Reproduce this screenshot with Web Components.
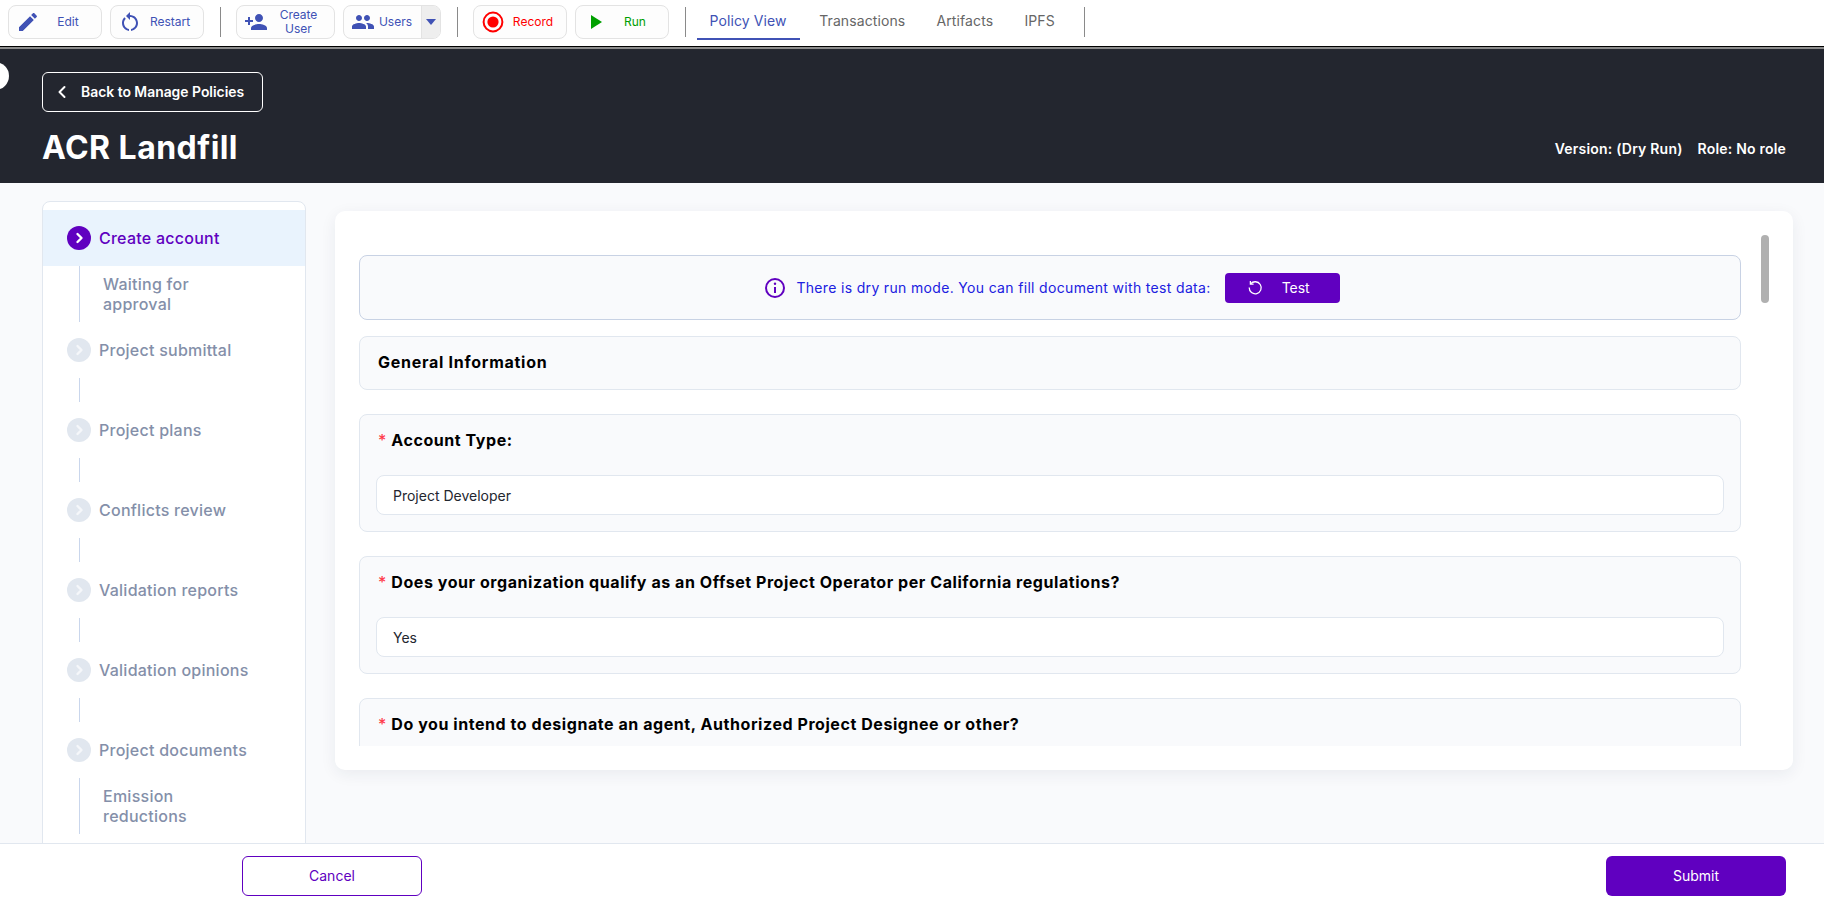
<!DOCTYPE html>
<html lang="en">
<head>
<meta charset="utf-8">
<title>ACR Landfill</title>
<style>
  html, body { margin: 0; height: 100%; overflow: hidden; }
  body { font-family: "Inter", "Liberation Sans", sans-serif; background: #f9fafc; color: #000; }
  policy-page { height: 905px; }
  tool-divider:last-child { margin-left: 10px; }
</style>
</head>
<body>

<policy-page>
  <app-toolbar slot="toolbar">
    <tool-button label="Edit"><svg viewBox="0 0 24 24" fill="#4052b5"><path d="M3 17.25V21h3.75L17.81 9.94l-3.75-3.75L3 17.25zM20.71 7.04c.39-.39.39-1.02 0-1.41l-2.34-2.34c-.39-.39-1.02-.39-1.41 0l-1.83 1.83 3.75 3.75 1.83-1.83z"/></svg></tool-button>
    <tool-button label="Restart"><svg viewBox="0 0 24 24" fill="#4052b5"><path d="M12 5V2L8 6l4 4V7c3.31 0 6 2.69 6 6 0 2.97-2.17 5.43-5 5.91v2.02c3.95-.49 7-3.85 7-7.93 0-4.42-3.58-8-8-8zm-6 8c0-1.65.67-3.15 1.76-4.24L6.34 7.34C4.9 8.79 4 10.79 4 13c0 4.08 3.05 7.44 7 7.93v-2.02c-2.83-.48-5-2.94-5-5.91z"/></svg></tool-button>
    <tool-divider></tool-divider>
    <tool-button label="Create User" narrow><svg viewBox="0 0 24 24" fill="#4052b5"><path d="M15 12c2.21 0 4-1.79 4-4s-1.79-4-4-4-4 1.79-4 4 1.79 4 4 4zm-9-2V7H4v3H1v2h3v3h2v-3h3v-2H6zm9 4c-2.67 0-8 1.34-8 4v2h16v-2c0-2.66-5.33-4-8-4z"/></svg></tool-button>
    <tool-button label="Users" dropdown><svg viewBox="0 0 24 24" fill="#4052b5"><path d="M16 11c1.66 0 2.99-1.34 2.99-3S17.66 5 16 5c-1.66 0-3 1.34-3 3s1.34 3 3 3zm-8 0c1.66 0 2.99-1.34 2.99-3S9.66 5 8 5C6.34 5 5 6.34 5 8s1.34 3 3 3zm0 2c-2.33 0-7 1.17-7 3.5V19h14v-2.5c0-2.33-4.67-3.5-7-3.5zm8 0c-.29 0-.62.02-.97.05 1.16.84 1.97 1.97 1.97 3.45V19h6v-2.5c0-2.33-4.67-3.5-7-3.5z"/></svg></tool-button>
    <tool-divider></tool-divider>
    <tool-button label="Record" color="#ff0000"><svg viewBox="0 0 24 24"><circle cx="12" cy="12" r="9.4" fill="none" stroke="#ff0000" stroke-width="2"/><circle cx="12" cy="12" r="5.6" fill="#ff0000"/></svg></tool-button>
    <tool-button label="Run" color="#00a000"><svg viewBox="0 0 24 24" fill="#00a000"><path d="M8 5v14l11-7z"/></svg></tool-button>
    <tool-divider></tool-divider>
    <tool-tab active>Policy View</tool-tab>
    <tool-tab>Transactions</tool-tab>
    <tool-tab>Artifacts</tool-tab>
    <tool-tab>IPFS</tool-tab>
    <tool-divider></tool-divider>
  </app-toolbar>

  <policy-header slot="header" back="Back to Manage Policies" name="ACR Landfill" version="Version: (Dry Run)" role="Role: No role"></policy-header>

  <step-list slot="steps">
    <step-item active>Create account</step-item>
    <step-item sub>Waiting for approval</step-item>
    <step-item>Project submittal</step-item>
    <step-item>Project plans</step-item>
    <step-item>Conflicts review</step-item>
    <step-item>Validation reports</step-item>
    <step-item>Validation opinions</step-item>
    <step-item>Project documents</step-item>
    <step-item sub>Emission reductions</step-item>
  </step-list>

  <form-card slot="form">
    <dry-run-note>There is dry run mode. You can fill document with test data:</dry-run-note>
    <form-section>General Information</form-section>
    <form-field label="Account Type:" value="Project Developer"></form-field>
    <form-field label="Does your organization qualify as an Offset Project Operator per California regulations?" value="Yes"></form-field>
    <form-field label="Do you intend to designate an agent, Authorized Project Designee or other?"></form-field>
  </form-card>

  <app-footer slot="footer"></app-footer>
</policy-page>

<script>
const chevron = (stroke) => /* html */ `
  <svg viewBox="0 0 24 24" width="24" height="24" fill="none" stroke="${stroke}" stroke-width="2.4" stroke-linecap="round" stroke-linejoin="round"><path d="M10.5 8l4 4-4 4"/></svg>`;

class PolicyPage extends HTMLElement {
  css = () => /* css */ `
  :host {
    display: flex;
    flex-direction: column;
    overflow: hidden;
  }
  .body {
    flex: 1;
    min-height: 0;
    display: flex;
    align-items: flex-start;
    gap: 29px;
    padding: 18px 31px 0 42px;
    overflow: hidden;
  }
  `;

  html = () => /* html */ `
  <style>${this.css()}</style>
  <slot name="toolbar"></slot>
  <slot name="header"></slot>
  <div class="body">
    <slot name="steps"></slot>
    <slot name="form"></slot>
  </div>
  <slot name="footer"></slot>
  `;

  constructor() {
    super();
    this.attachShadow({ mode: "open" });
  }

  connectedCallback() {
    this.shadowRoot.innerHTML = this.html();
  }
}

class AppToolbar extends HTMLElement {
  css = () => /* css */ `
  :host {
    display: flex;
    align-items: flex-start;
    gap: 8px;
    height: 41px;
    padding: 5px 0 0 8px;
    background: #fff;
    border-bottom: 1px solid #000;
  }
  `;

  constructor() {
    super();
    this.attachShadow({ mode: "open" }).innerHTML = `<style>${this.css()}</style><slot></slot>`;
  }
}

class ToolDivider extends HTMLElement {
  constructor() {
    super();
    this.attachShadow({ mode: "open" }).innerHTML = /* html */ `
    <style>
      :host { display: block; width: 1px; height: 30px; margin: 2px 7.5px 0; background: #8a8a8a; }
    </style>`;
  }
}

class ToolButton extends HTMLElement {
  css = () => /* css */ `
  :host {
    display: flex;
    width: 94px;
    height: 34px;
    box-sizing: border-box;
    border: 1px solid #e3e3e3;
    border-radius: 8px;
    background: #fdfdfd;
    overflow: hidden;
    font-size: 12px;
    line-height: 14px;
    color: var(--tool-color, #4052b5);
  }
  :host([narrow]) { width: 99px; }
  :host([dropdown]) { width: 98px; }
  .main {
    flex: 1;
    min-width: 0;
    display: flex;
    align-items: center;
    padding: 0 5px 0 7px;
  }
  ::slotted(svg) { width: 24px; height: 24px; flex: none; }
  .label { flex: 1; text-align: center; }
  :host([narrow]) .label { padding: 0 10px; }
  .caret {
    width: 18px;
    background: #eeeeee;
    border-left: 1px solid #e3e3e3;
    display: flex;
    align-items: center;
    justify-content: center;
    flex: none;
  }
  .caret::before {
    content: "";
    border: 5.5px solid transparent;
    border-top: 6px solid #4052b5;
    border-bottom: 0;
  }
  `;

  constructor() {
    super();
    this.attachShadow({ mode: "open" });
  }

  connectedCallback() {
    const color = this.getAttribute("color");
    if (color) this.style.setProperty("--tool-color", color);
    const caret = this.hasAttribute("dropdown") ? `<div class="caret"></div>` : "";
    this.shadowRoot.innerHTML = /* html */ `
    <style>${this.css()}</style>
    <div class="main"><slot></slot><span class="label">${this.getAttribute("label")}</span></div>
    ${caret}`;
  }
}

class ToolTab extends HTMLElement {
  constructor() {
    super();
    this.attachShadow({ mode: "open" }).innerHTML = /* html */ `
    <style>
      :host {
        display: block;
        height: 35px;
        padding: 0 11.6px;
        line-height: 31px;
        font-size: 14px;
        letter-spacing: 0.1px;
        color: #666;
      }
      :host([active]) {
        margin-left: -4.5px;
        padding: 0 13px;
        color: #4052b5;
        box-shadow: inset 0 -2px 0 #4052b5;
      }
    </style>
    <slot></slot>`;
  }
}

class PolicyHeader extends HTMLElement {
  css = () => /* css */ `
  :host {
    display: block;
    position: relative;
    height: 136px;
    box-sizing: border-box;
    padding: 23px 38px 0 42px;
    background: #23262f;
    border-top: 2px solid #8c8c8c;
    color: #fff;
  }
  .dot {
    position: absolute;
    left: -19px;
    top: 13px;
    width: 28px;
    height: 28px;
    border-radius: 50%;
    background: #fff;
  }
  .back {
    display: flex;
    align-items: center;
    width: 221px;
    height: 40px;
    box-sizing: border-box;
    border: 1px solid #fff;
    border-radius: 6px;
    padding-left: 8px;
    font-size: 13.9px;
    font-weight: 600;
  }
  .back svg { margin-right: 6px; }
  .row {
    display: flex;
    align-items: center;
    justify-content: space-between;
    margin-top: 16px;
  }
  h1 {
    margin: 0;
    font-size: 32px;
    line-height: 40px;
    font-weight: 700;
    letter-spacing: 0.45px;
  }
  .meta {
    display: flex;
    gap: 15px;
    font-size: 14px;
    font-weight: 600;
    letter-spacing: 0.2px;
  }
  `;

  constructor() {
    super();
    this.attachShadow({ mode: "open" });
  }

  connectedCallback() {
    this.shadowRoot.innerHTML = /* html */ `
    <style>${this.css()}</style>
    <div class="dot"></div>
    <div class="back"><svg viewBox="0 0 24 24" width="24" height="24" fill="none" stroke="#fff" stroke-width="2" stroke-linecap="round" stroke-linejoin="round"><path d="M13.5 7l-5 5 5 5"/></svg>${this.getAttribute("back")}</div>
    <div class="row">
      <h1>${this.getAttribute("name")}</h1>
      <div class="meta"><span>${this.getAttribute("version")}</span><span>${this.getAttribute("role")}</span></div>
    </div>`;
  }
}

class StepList extends HTMLElement {
  constructor() {
    super();
    this.attachShadow({ mode: "open" }).innerHTML = /* html */ `
    <style>
      :host {
        display: block;
        flex: none;
        width: 264px;
        height: 700px;
        box-sizing: border-box;
        padding-top: 8px;
        background: #fff;
        border: 1px solid #e1e7ef;
        border-radius: 8px;
      }
    </style>
    <slot></slot>`;
  }
}

class StepItem extends HTMLElement {
  css = () => /* css */ `
  :host {
    display: block;
    font-size: 16px;
    line-height: 20px;
    font-weight: 500;
    letter-spacing: 0.25px;
    color: #848fa9;
  }
  .head {
    display: flex;
    align-items: center;
    gap: 8px;
    height: 56px;
    padding-left: 24px;
  }
  :host([active]) .head { background: #e9f3fd; color: #6000c0; }
  .bullet {
    width: 24px;
    height: 24px;
    border-radius: 50%;
    background: #e1e7ef;
  }
  :host([active]) .bullet { background: #6000c0; }
  .tail {
    margin-left: 36px;
    height: 24px;
    border-left: 1px solid #c9d6ec;
  }
  .sub {
    margin-left: 36px;
    height: 56px;
    border-left: 1px solid #c9d6ec;
    padding-left: 23px;
    display: flex;
    align-items: center;
    width: 110px;
  }
  `;

  constructor() {
    super();
    this.attachShadow({ mode: "open" });
  }

  connectedCallback() {
    const active = this.hasAttribute("active");
    if (this.hasAttribute("sub")) {
      this.shadowRoot.innerHTML = `<style>${this.css()}</style><div class="sub"><span><slot></slot></span></div>`;
      return;
    }
    // the line under a step belongs to the next one when that is a sub step
    const next = this.nextElementSibling;
    const tail = next && next.hasAttribute("sub") ? "" : `<div class="tail"></div>`;
    this.shadowRoot.innerHTML = /* html */ `
    <style>${this.css()}</style>
    <div class="head"><span class="bullet">${chevron(active ? "#fff" : "#f5f7fa")}</span><span><slot></slot></span></div>
    ${tail}`;
  }
}

class FormCard extends HTMLElement {
  css = () => /* css */ `
  :host {
    display: block;
    position: relative;
    flex: none;
    width: 1458px;
    height: 559px;
    margin-top: 10px;
    box-sizing: border-box;
    padding: 44px 52px 24px 24px;
    background: #fff;
    border-radius: 10px;
    box-shadow: 0 4px 16px rgba(32, 40, 70, 0.07);
  }
  .scroll {
    height: 100%;
    overflow: hidden;
  }
  .thumb {
    position: absolute;
    left: 1426px;
    top: 24px;
    width: 8px;
    height: 68px;
    border-radius: 4px;
    background: #b0b0b0;
  }
  `;

  constructor() {
    super();
    this.attachShadow({ mode: "open" }).innerHTML = /* html */ `
    <style>${this.css()}</style>
    <div class="scroll"><slot></slot></div>
    <div class="thumb"></div>`;
  }
}

class DryRunNote extends HTMLElement {
  css = () => /* css */ `
  :host {
    display: flex;
    align-items: center;
    justify-content: center;
    height: 65px;
    box-sizing: border-box;
    margin-bottom: 16px;
    padding-left: 5px;
    background: #f9fafc;
    border: 1px solid #c8d2e4;
    border-radius: 8px;
    font-size: 14px;
    font-weight: 400;
    letter-spacing: 0.33px;
    color: #2020e0;
  }
  .info { margin-right: 11px; }
  button {
    display: flex;
    align-items: center;
    width: 115px;
    height: 30px;
    margin-left: 14px;
    padding: 0 0 0 22px;
    border: 0;
    border-radius: 4px;
    background: #6000c0;
    color: #fff;
    font: 400 14px "Inter", sans-serif;
  }
  button svg { margin-right: 19px; }
  `;

  constructor() {
    super();
    this.attachShadow({ mode: "open" }).innerHTML = /* html */ `
    <style>${this.css()}</style>
    <svg class="info" viewBox="0 0 20 20" width="20" height="20" fill="none" stroke="#6000c0" stroke-width="2"><circle cx="10" cy="10" r="9"/><path d="M10 9v6" /><circle cx="10" cy="5.7" r="1.2" fill="#6000c0" stroke="none"/></svg>
    <span><slot></slot></span>
    <button><svg viewBox="0 0 16 16" width="16" height="16" fill="none" stroke="#fff" stroke-width="1.3"><path d="M3.6 3.9A6 6 0 1 1 2.2 7.6"/><path d="M3.4 0.9v3.2h3.2"/></svg>Test</button>`;
  }
}

class FormSection extends HTMLElement {
  constructor() {
    super();
    this.attachShadow({ mode: "open" }).innerHTML = /* html */ `
    <style>
      :host {
        display: flex;
        align-items: center;
        height: 54px;
        box-sizing: border-box;
        margin-bottom: 24px;
        padding: 0 0 3px 18px;
        background: #f9fafc;
        border: 1px solid #e1e7ef;
        border-radius: 8px;
        font-size: 16px;
        font-weight: 700;
        letter-spacing: 0.73px;
      }
    </style>
    <slot></slot>`;
  }
}

class FormField extends HTMLElement {
  css = () => /* css */ `
  :host {
    display: block;
    height: 118px;
    box-sizing: border-box;
    margin-bottom: 24px;
    padding: 0 16px;
    background: #f9fafc;
    border: 1px solid #e1e7ef;
    border-radius: 8px;
  }
  .label {
    display: flex;
    align-items: center;
    gap: 5px;
    height: 49px;
    margin-bottom: 11px;
    padding-left: 2px;
    font-size: 16px;
    font-weight: 700;
    letter-spacing: 0.56px;
  }
  .req { color: #ff3b4a; font-weight: 500; letter-spacing: 0; }
  .value {
    height: 40px;
    box-sizing: border-box;
    padding-left: 16px;
    line-height: 40px;
    background: #fff;
    border: 1px solid #e1e7ef;
    border-radius: 8px;
    font-size: 14px;
    color: #23262f;
  }
  `;

  constructor() {
    super();
    this.attachShadow({ mode: "open" });
  }

  connectedCallback() {
    this.shadowRoot.innerHTML = /* html */ `
    <style>${this.css()}</style>
    <div class="label"><span class="req">*</span><span>${this.getAttribute("label")}</span></div>
    <div class="value">${this.getAttribute("value") || ""}</div>`;
  }
}

class AppFooter extends HTMLElement {
  css = () => /* css */ `
  :host {
    display: flex;
    align-items: center;
    justify-content: space-between;
    height: 62px;
    box-sizing: border-box;
    padding: 2px 38px 0 242px;
    background: #fff;
    border-top: 1px solid #e1e7ef;
    position: relative;
  }
  button {
    width: 180px;
    height: 40px;
    border-radius: 6px;
    font: 400 14px "Inter", sans-serif;
  }
  .cancel { background: #fff; border: 1px solid #6000c0; color: #6000c0; }
  .submit { background: #6000c0; border: 0; color: #fff; }
  `;

  constructor() {
    super();
    this.attachShadow({ mode: "open" }).innerHTML = /* html */ `
    <style>${this.css()}</style>
    <button class="cancel">Cancel</button>
    <button class="submit">Submit</button>`;
  }
}

customElements.define("policy-page", PolicyPage);
customElements.define("app-toolbar", AppToolbar);
customElements.define("tool-divider", ToolDivider);
customElements.define("tool-button", ToolButton);
customElements.define("tool-tab", ToolTab);
customElements.define("policy-header", PolicyHeader);
customElements.define("step-list", StepList);
customElements.define("step-item", StepItem);
customElements.define("form-card", FormCard);
customElements.define("dry-run-note", DryRunNote);
customElements.define("form-section", FormSection);
customElements.define("form-field", FormField);
customElements.define("app-footer", AppFooter);
</script>
</body>
</html>
